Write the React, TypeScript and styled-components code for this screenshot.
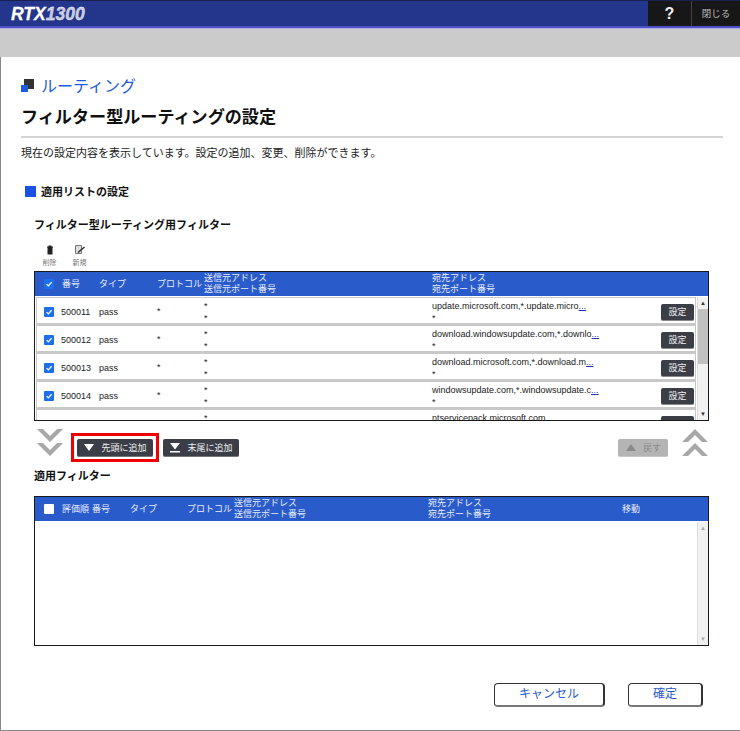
import React from 'react'
import styled, { createGlobalStyle } from 'styled-components'

const FONT = `"Liberation Sans", Arial, "Noto Sans CJK JP", sans-serif`

const GlobalStyle = createGlobalStyle`
  html, body { margin: 0; padding: 0; background: #fff; }
  body { font-family: ${FONT}; color: #222; width: 740px; height: 731px; overflow: hidden; }
  * { box-sizing: border-box; }
`

const Frame = styled.div`
  width: 740px;
  height: 731px;
  display: flex;
  flex-direction: column;
  overflow: hidden;
`

const TopBar = styled.header`
  height: 28px;
  flex: none;
  display: flex;
  justify-content: space-between;
  background: #24358c;
  border-top: 1px solid #1a2050;
  border-bottom: 2px solid #4f4fc8;
`

const Logo = styled.div`
  padding: 1px 0 0 11px;
  font: italic bold 17.5px/24px "Liberation Sans", Arial, sans-serif;
  color: #fff;
  -webkit-text-stroke: 0.3px #fff;
  span { color: #c4c8dc; }
`

const TopActions = styled.div`
  display: flex;
  background: #171717;
`

const HelpButton = styled.div`
  width: 44px;
  text-align: center;
  font: bold 16px/25px "Liberation Sans", Arial, sans-serif;
  color: #eee;
  border-right: 1px solid #444;
`

const CloseButton = styled.div`
  width: 48px;
  text-align: center;
  font-size: 9.5px;
  line-height: 25px;
  color: #bbb;
`

const Band = styled.div`
  height: 29px;
  flex: none;
  background: #cbcbcb;
  border-top: 1px solid #b0b0e8;
`

const Content = styled.main`
  flex: 1;
  min-height: 0;
  padding: 17px 17px 0 20px;
  border-left: 1px solid #888;
  border-bottom: 1px solid #888;
`

const CategoryRow = styled.div`
  display: flex;
  align-items: center;
  gap: 7px;
  height: 22px;
`

const CategoryTitle = styled.div`
  font-size: 16px;
  color: #1f5be0;
`

const PageTitle = styled.h1`
  margin: 10px 0 0;
  height: 32px;
  font-size: 17.1px;
  font-weight: bold;
  line-height: 24px;
  color: #111;
  border-bottom: 2px solid #d4d4d4;
`

const Description = styled.p`
  margin: 8px 0 0;
  font-size: 11px;
  line-height: 14px;
  color: #222;
`

const SectionRow = styled.div`
  display: flex;
  align-items: center;
  gap: 5px;
  margin: 24px 0 0 4px;
  height: 14px;
`

const SectionMark = styled.span`
  width: 11px;
  height: 11px;
  background: #1a53e4;
`

const SectionTitle = styled.div`
  font-size: 11px;
  font-weight: bold;
  color: #111;
`

const SubTitle = styled.h2<{ $top: number }>`
  margin: ${(p) => p.$top}px 0 0 13px;
  font-size: 11px;
  font-weight: bold;
  line-height: 16px;
  color: #111;
`

const Toolbar = styled.div`
  display: flex;
  gap: 9px;
  margin: 9px 0 0 18px;
  height: 29px;
`

const ToolItem = styled.div`
  width: 21px;
  display: flex;
  flex-direction: column;
  align-items: center;
  gap: 2px;
  font-size: 7px;
  line-height: 9px;
  color: #777;
`

const ToolIcon = styled.svg`
  width: 12px;
  height: 12px;
  margin-top: 2px;
`

const TableBox = styled.section<{ $top: number }>`
  width: 675px;
  height: 150px;
  margin: ${(p) => p.$top}px 0 0 13px;
  border: 1px solid #1a1a1a;
  display: flex;
  flex-direction: column;
  overflow: hidden;
`

const HeaderRow = styled.div`
  height: 24px;
  flex: none;
  display: flex;
  align-items: center;
  background: #2a5bcb;
  color: #e8eefc;
`

const HeaderCell = styled.div<{ $w: number }>`
  width: ${(p) => p.$w}px;
  flex: none;
  line-height: 11px;
  font-size: 9px;
  white-space: nowrap;
`

const TableBody = styled.div`
  flex: 1;
  min-height: 0;
  display: flex;
  margin-top: 1px;
`

const RowList = styled.div`
  flex: 1;
  min-width: 0;
  overflow: hidden;
`

const Row = styled.div`
  height: 28px;
  padding-top: 3px;
  display: flex;
  align-items: center;
  background: #fff;
  border: 1px solid #c8c8c8;
  border-width: 1px 1px 2px 1px;
  margin: 0 0 0 1px;
  font-size: 9px;
  color: #222;
`

const CheckCell = styled.div<{ $w: number }>`
  width: ${(p) => p.$w}px;
  flex: none;
  display: flex;
  justify-content: flex-end;
  padding-right: 8px;
`

const RowCheckCell = styled(CheckCell)`
  padding-right: 7px;
`

const Check = styled.span<{ $on?: boolean }>`
  width: 10px;
  height: 10px;
  display: flex;
  align-items: center;
  justify-content: center;
  border-radius: 1px;
  background: ${(p) => (p.$on ? '#1b6fe8' : '#fff')};
  svg { width: 8px; height: 8px; }
`

const Cell = styled.div<{ $w: number; $up?: number }>`
  width: ${(p) => p.$w}px;
  flex: none;
  line-height: 12px;
  white-space: nowrap;
  ${(p) => (p.$up ? `margin-top: -${p.$up}px;` : '')}
`

const More = styled.span`
  color: #2233bb;
  text-decoration: underline;
`

const Setting = styled.div`
  width: 33px;
  height: 17px;
  flex: none;
  margin-left: auto;
  margin-right: 1px;
  background: #3b3e46;
  border-radius: 2px;
  border-bottom: 1px solid #888;
  color: #eee;
  font-size: 9px;
  line-height: 16px;
  text-align: center;
`

const ScrollBar = styled.div`
  width: 11px;
  flex: none;
  margin-left: 1px;
  display: flex;
  flex-direction: column;
  background: #f1f1f1;
  border-left: 1px solid #ddd;
`

const ScrollArrow = styled.div<{ $muted?: boolean }>`
  height: 12px;
  flex: none;
  font-size: 6px;
  line-height: 12px;
  text-align: center;
  color: ${(p) => (p.$muted ? '#a8a8a8' : '#333')};
`

const ScrollThumb = styled.div`
  height: 55px;
  flex: none;
  background: #c1c1c1;
`

const ScrollRest = styled.div`
  flex: 1;
`

const MoveRow = styled.div`
  display: flex;
  align-items: flex-start;
  height: 34px;
  margin: 8px 0 0 15px;
  width: 673px;
`

const Chevrons = styled.svg`
  width: 28px;
  height: 28px;
  flex: none;
`

const Highlight = styled.div`
  margin: 4px 0 0 7px;
  padding: 3px 3px 2px;
  border: 3px solid #f00000;
  display: flex;
`

const ActionButton = styled.div<{ $w: number; $off?: boolean }>`
  width: ${(p) => p.$w}px;
  height: 18px;
  flex: none;
  display: flex;
  align-items: center;
  justify-content: center;
  gap: 6px;
  border-radius: 2px;
  font-size: 9px;
  background: ${(p) => (p.$off ? '#b4b4b4' : '#3b3e46')};
  color: ${(p) => (p.$off ? '#8a8a8a' : '#eee')};
  border-bottom: 1px solid ${(p) => (p.$off ? '#c8c8c8' : '#777')};
`

const Triangle = styled.svg`
  width: 12px;
  height: 10px;
  flex: none;
`

const TailGap = styled.div`
  margin: 10px 0 0 4px;
`

const RightGroup = styled.div`
  margin-left: auto;
  display: flex;
  align-items: flex-start;
  gap: 13px;
`

const UndoGap = styled.div`
  margin-top: 10px;
`

const EmptyArea = styled.div`
  flex: 1;
`

const Footer = styled.div`
  display: flex;
  justify-content: flex-end;
  gap: 23px;
  margin: 37px 0 0 0;
  padding-right: 20px;
`

const FooterButton = styled.div<{ $w: number }>`
  width: ${(p) => p.$w}px;
  height: 24px;
  border: 1px solid #333;
  border-right-width: 2px;
  border-bottom: 2px solid #777;
  border-radius: 4px;
  background: #fff;
  color: #2a5bcb;
  font-size: 12px;
  line-height: 21px;
  text-align: center;
`

type RowData = { no: string; dest: string }

const rows: RowData[] = [
  { no: '500011', dest: 'update.microsoft.com,*.update.micro' },
  { no: '500012', dest: 'download.windowsupdate.com,*.downlo' },
  { no: '500013', dest: 'download.microsoft.com,*.download.m' },
  { no: '500014', dest: 'windowsupdate.com,*.windowsupdate.c' },
]

const Tick = () => (
  <svg viewBox="0 0 10 10">
    <path d="M2 5.2 4.2 7.4 8.2 2.8" fill="none" stroke="#fff" strokeWidth="1.6" />
  </svg>
)

const Down = () => (
  <Chevrons viewBox="0 0 28 28">
    <path d="M1 0h6l7 7 7-7h6L14 13z M1 14h6l7 7 7-7h6L14 27z" fill="#a8a8a8" />
  </Chevrons>
)

const Up = () => (
  <Chevrons viewBox="0 0 28 28">
    <path d="M1 13h6l7-7 7 7h6L14 0z M1 27h6l7-7 7 7h6L14 14z" fill="#a8a8a8" />
  </Chevrons>
)

const Scroll = ({ thumb }: { thumb?: boolean }) => (
  <ScrollBar>
    <ScrollArrow $muted={!thumb}>▲</ScrollArrow>
    {thumb && <ScrollThumb />}
    <ScrollRest />
    <ScrollArrow $muted={!thumb}>▼</ScrollArrow>
  </ScrollBar>
)

const App = () => (
  <Frame>
    <GlobalStyle />
    <TopBar>
      <Logo>
        RTX<span>1300</span>
      </Logo>
      <TopActions>
        <HelpButton>?</HelpButton>
        <CloseButton>閉じる</CloseButton>
      </TopActions>
    </TopBar>
    <Band />
    <Content>
      <CategoryRow>
        <svg width="13" height="13" viewBox="0 0 13 13">
          <rect x="3" y="0" width="10" height="10" fill="#333" />
          <rect x="0" y="6" width="7" height="7" fill="#1f5be0" />
        </svg>
        <CategoryTitle>ルーティング</CategoryTitle>
      </CategoryRow>
      <PageTitle>フィルター型ルーティングの設定</PageTitle>
      <Description>現在の設定内容を表示しています。設定の追加、変更、削除ができます。</Description>
      <SectionRow>
        <SectionMark />
        <SectionTitle>適用リストの設定</SectionTitle>
      </SectionRow>
      <SubTitle $top={19}>フィルター型ルーティング用フィルター</SubTitle>
      <Toolbar>
        <ToolItem>
          <ToolIcon viewBox="0 0 12 12">
            <path d="M3.5 3.5h5v7h-5z M3 2.5h6v1H3z M4.5 1.5h3v1h-3z" fill="#222" />
          </ToolIcon>
          削除
        </ToolItem>
        <ToolItem>
          <ToolIcon viewBox="0 0 12 12">
            <path d="M1.5 1.5h6v8h-6z" fill="#ddd" stroke="#777" />
            <path d="M4 8.5 10.5 3" stroke="#333" strokeWidth="1.6" />
          </ToolIcon>
          新規
        </ToolItem>
      </Toolbar>
      <TableBox $top={0}>
        <HeaderRow>
          <CheckCell $w={27}>
            <Check $on>
              <Tick />
            </Check>
          </CheckCell>
          <HeaderCell $w={37}>番号</HeaderCell>
          <HeaderCell $w={58}>タイプ</HeaderCell>
          <HeaderCell $w={47}>プロトコル</HeaderCell>
          <HeaderCell $w={228}>
            送信元アドレス
            <br />
            送信元ポート番号
          </HeaderCell>
          <HeaderCell $w={200}>
            宛先アドレス
            <br />
            宛先ポート番号
          </HeaderCell>
        </HeaderRow>
        <TableBody>
          <RowList>
            {rows.map((r) => (
              <Row key={r.no}>
                <RowCheckCell $w={24}>
                  <Check $on>
                    <Tick />
                  </Check>
                </RowCheckCell>
                <Cell $w={38}>{r.no}</Cell>
                <Cell $w={58}>pass</Cell>
                <Cell $w={47} $up={2}>
                  *
                </Cell>
                <Cell $w={228}>
                  *
                  <br />*
                </Cell>
                <Cell $w={200}>
                  {r.dest}
                  <More>...</More>
                  <br />*
                </Cell>
                <Setting>設定</Setting>
              </Row>
            ))}
            <Row>
              <RowCheckCell $w={24} />
              <Cell $w={38} />
              <Cell $w={58} />
              <Cell $w={47} />
              <Cell $w={228}>
                *
                <br />*
              </Cell>
              <Cell $w={200}>
                ntservicepack.microsoft.com
                <br />*
              </Cell>
              <Setting />
            </Row>
          </RowList>
          <Scroll thumb />
        </TableBody>
      </TableBox>
      <MoveRow>
        <Down />
        <Highlight>
          <ActionButton $w={76}>
            <Triangle viewBox="0 0 12 10">
              <path d="M1 1h10L6 8z" fill="#fff" />
            </Triangle>
            先頭に追加
          </ActionButton>
        </Highlight>
        <TailGap>
          <ActionButton $w={76}>
            <Triangle viewBox="0 0 12 10">
              <path d="M1 0h10L6 6.5z M1 8h10v1.5H1z" fill="#fff" />
            </Triangle>
            末尾に追加
          </ActionButton>
        </TailGap>
        <RightGroup>
          <UndoGap>
            <ActionButton $w={50} $off>
              <Triangle viewBox="0 0 12 10">
                <path d="M1 8h10L6 1z" fill="#8a8a8a" />
              </Triangle>
              戻す
            </ActionButton>
          </UndoGap>
          <Up />
        </RightGroup>
      </MoveRow>
      <SubTitle $top={5}>適用フィルター</SubTitle>
      <TableBox $top={12}>
        <HeaderRow>
          <CheckCell $w={27}>
            <Check />
          </CheckCell>
          <HeaderCell $w={30}>評価順</HeaderCell>
          <HeaderCell $w={38}>番号</HeaderCell>
          <HeaderCell $w={57}>タイプ</HeaderCell>
          <HeaderCell $w={47}>プロトコル</HeaderCell>
          <HeaderCell $w={194}>
            送信元アドレス
            <br />
            送信元ポート番号
          </HeaderCell>
          <HeaderCell $w={194}>
            宛先アドレス
            <br />
            宛先ポート番号
          </HeaderCell>
          <HeaderCell $w={40}>移動</HeaderCell>
        </HeaderRow>
        <TableBody>
          <EmptyArea />
          <Scroll />
        </TableBody>
      </TableBox>
      <Footer>
        <FooterButton $w={111}>キャンセル</FooterButton>
        <FooterButton $w={75}>確定</FooterButton>
      </Footer>
    </Content>
  </Frame>
)

export default App
